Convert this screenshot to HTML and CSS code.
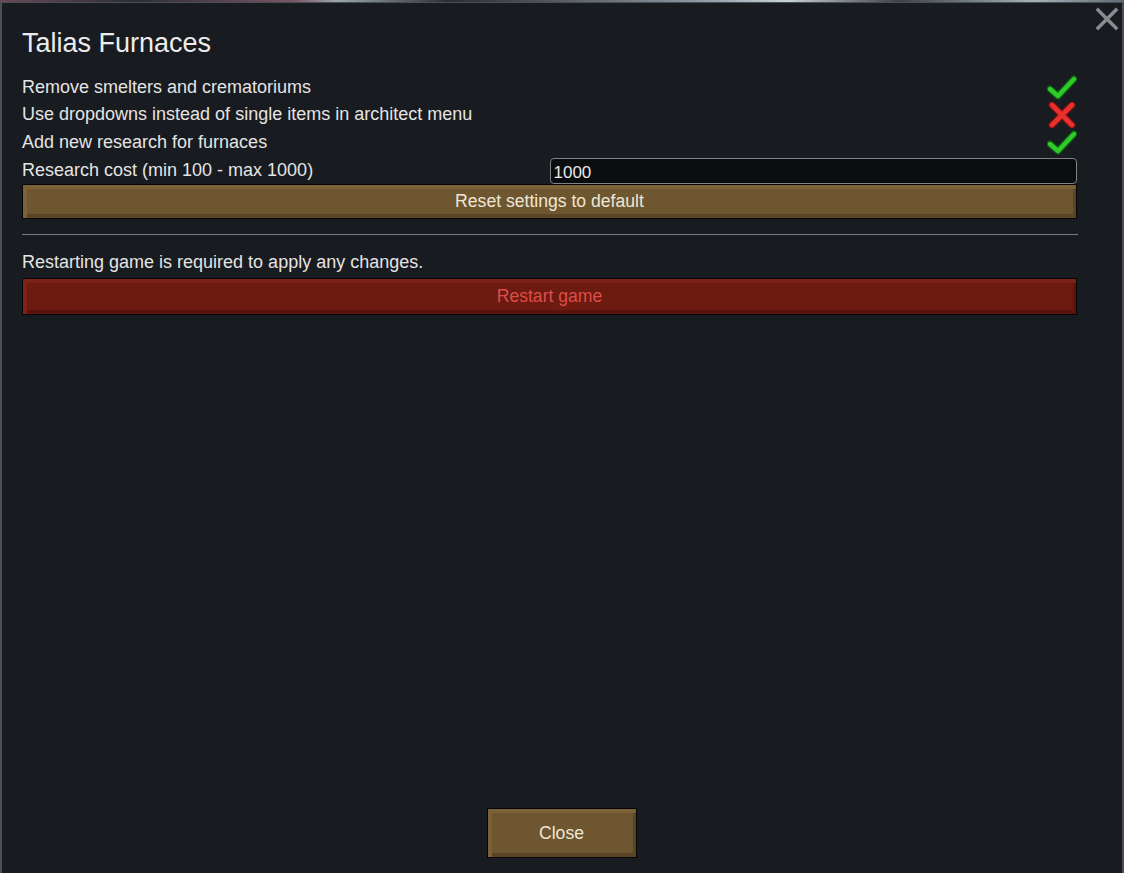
FILE: index.html
```html
<!DOCTYPE html>
<html lang="en">
<head>
  <meta charset="UTF-8" />
  <meta name="viewport" content="width=device-width, initial-scale=1.0"/>
  <title>Talias Furnaces</title>
  <link rel="stylesheet" href="styles.css">
</head>

<body>
  <div class="backdrop"></div>

  <div class="window">
    <div class="close-x">
      <svg width="24" height="24" viewBox="0 0 24 24">
        <path d="M3 3 L21 21 M21 3 L3 21" stroke="#8a8d90" stroke-width="3.4" stroke-linecap="square"/>
      </svg>
    </div>

    <div class="title">Talias Furnaces</div>

    <div class="setting">
      <span>Remove smelters and crematoriums</span>
      <svg class="check" width="30" height="26" viewBox="0 0 30 26">
        <path d="M3 15 L11 22 L27 5" fill="none" stroke="#0f5a12" stroke-width="7" stroke-linecap="round" stroke-linejoin="round"/>
        <path d="M3 15 L11 22 L27 5" fill="none" stroke="#2fcb2a" stroke-width="4.4" stroke-linecap="round" stroke-linejoin="round"/>
      </svg>
    </div>
    <div class="setting short">
      <span>Use dropdowns instead of single items in architect menu</span>
      <svg class="check" width="30" height="26" viewBox="0 0 30 26">
        <path d="M5 3 L25 23 M25 3 L5 23" fill="none" stroke="#7a1212" stroke-width="7" stroke-linecap="round"/>
        <path d="M5 3 L25 23 M25 3 L5 23" fill="none" stroke="#e8302c" stroke-width="4.6" stroke-linecap="round"/>
      </svg>
    </div>
    <div class="setting">
      <span>Add new research for furnaces</span>
      <svg class="check" width="30" height="26" viewBox="0 0 30 26">
        <path d="M3 15 L11 22 L27 5" fill="none" stroke="#0f5a12" stroke-width="7" stroke-linecap="round" stroke-linejoin="round"/>
        <path d="M3 15 L11 22 L27 5" fill="none" stroke="#2fcb2a" stroke-width="4.4" stroke-linecap="round" stroke-linejoin="round"/>
      </svg>
    </div>
    <div class="setting split">
      <span>Research cost (min 100 - max 1000)</span>
      <div class="field">1000</div>
    </div>

    <div class="btn btn-brown wide">Reset settings to default</div>

    <div class="separator"></div>

    <div class="note">Restarting game is required to apply any changes.</div>
    <div class="btn btn-red wide tall">Restart game</div>

    <div class="spacer"></div>

    <div class="bottom">
      <div class="btn btn-brown close-btn">Close</div>
    </div>
  </div>
</body>
</html>
```

FILE: styles.css
```css
html, body {
  margin: 0;
  height: 100%;
  overflow: hidden;
}

body {
  font-family: "Liberation Sans", Arial, sans-serif;
  background-color: #181b1f;
  color: #e4e4e4;
  display: flex;
  flex-direction: column;
}

/* game world peeking above the dialog */
.backdrop {
  height: 2px;
  background: linear-gradient(90deg, #6a4a55 0%, #2b2e33 12%, #7a5562 26%, #9aa7ad 30%, #2a2d31 40%, #8d96a0 62%, #c9d2d8 70%, #3b4045 80%, #a4b2b8 92%, #5f6870 100%);
}

.window {
  flex: 1;
  display: flex;
  flex-direction: column;
  position: relative;
  background-color: #181b1f;
  border-left: 2px solid #4b5056;
  border-right: 2px solid #4b5056;
  border-top: 1px solid #4b5056;
  padding: 0 45px 15px 20px;
}

.close-x {
  position: absolute;
  top: 4px;
  right: 3px;
  width: 24px;
  height: 24px;
}

.title {
  font-size: 27px;
  margin-top: 25px;
  margin-bottom: 15px;
  color: #ececec;
  line-height: 30px;
}

.setting {
  display: flex;
  justify-content: space-between;
  align-items: center;
  height: 28px;
  font-size: 18px;
}

.setting.short {
  height: 27px;
}

.setting.split {
  display: grid;
  grid-template-columns: 1fr 1fr;
  height: 28px;
  align-items: end;
}

.setting.split span {
  align-self: center;
}

.field {
  height: 26px;
  line-height: 27px;
  background-color: #0b0c0e;
  border: 1px solid #7e8287;
  border-radius: 4px;
  padding-left: 3px;
  box-sizing: border-box;
  color: #e8e8e8;
  font-size: 17px;
}

.btn {
  display: flex;
  align-items: center;
  justify-content: center;
  box-sizing: border-box;
  border: 1px solid #050505;
  font-size: 17.6px;
}

.btn-brown {
  background-color: #6d5630;
  color: #efe6d6;
  box-shadow: inset 4px 4px 0 #7a6136, inset -3px -4px 0 #5a4526;
}

.btn-red {
  background-color: #6d1a10;
  color: #dd4d4b;
  box-shadow: inset 4px 4px 0 #7c2217, inset -3px -4px 0 #5a140b;
}

.wide {
  height: 35px;
  width: 100%;
}

.wide.tall {
  height: 37px;
}

.separator {
  height: 1px;
  background-color: #7a7d80;
  margin: 15px -1px 16px 0;
}

.note {
  font-size: 18px;
  line-height: 22px;
  margin-bottom: 5px;
}

.spacer {
  flex: 1;
}

.bottom {
  display: flex;
  justify-content: center;
  padding-left: 24px;
}

.close-btn {
  width: 150px;
  height: 50px;
}
```
